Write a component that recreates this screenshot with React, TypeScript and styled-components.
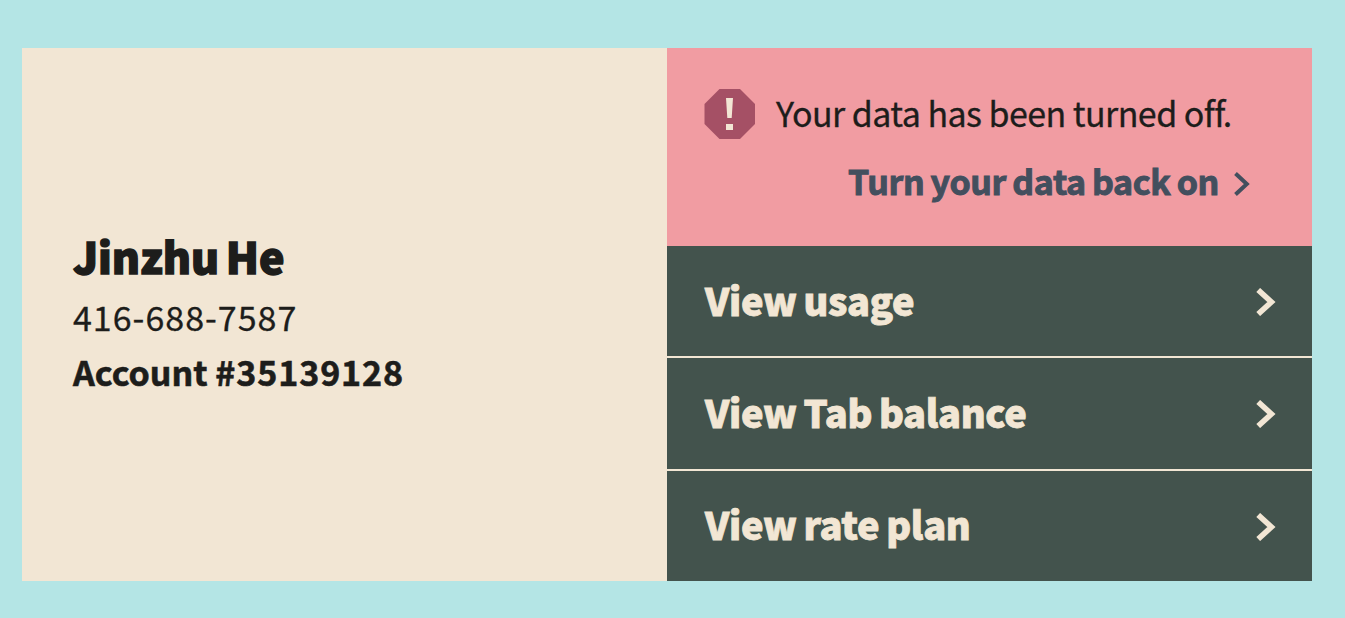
import styled, { createGlobalStyle } from 'styled-components';

const GlobalStyle = createGlobalStyle`
  * {
    box-sizing: border-box;
  }

  body {
    margin: 0;
    background: #b4e5e5;
    color: #1d1d1b;
    font-family: 'Noto Sans CJK SC', 'Noto Sans', sans-serif;
  }
`;

const Page = styled.main`
  height: 618px;
  padding: 48px 33px 37px 22px;
`;

const Card = styled.section`
  display: grid;
  grid-template-columns: repeat(2, minmax(0, 1fr));
  height: 533px;
  background: #f2e6d4;
`;

const Profile = styled.div`
  display: flex;
  flex-direction: column;
  padding: 177px 50px 0 51px;
`;

const Name = styled.h1`
  margin: 0 0 4px;
  font-size: 43px;
  font-weight: 900;
  line-height: 60px;
  letter-spacing: -0.1px;
  word-spacing: -3px;
  white-space: nowrap;
  -webkit-text-stroke: 1.4px currentColor;
`;

const Phone = styled.p`
  margin: 0;
  font-size: 34px;
  line-height: 56px;
  letter-spacing: 1px;
  -webkit-text-stroke: 0.3px currentColor;
`;

const Account = styled.p`
  margin: 0;
  font-size: 34px;
  font-weight: 700;
  line-height: 54px;
  white-space: nowrap;
  -webkit-text-stroke: 0.6px currentColor;
`;

const AccountNumber = styled.span`
  letter-spacing: 0.9px;
`;

const Actions = styled.div`
  display: flex;
  flex-direction: column;
`;

const Alert = styled.div`
  height: 198px;
  padding: 41px 62px 0 37px;
  background: #f19ca2;
`;

const Message = styled.div`
  display: flex;
  align-items: center;
  gap: 21px;
  height: 50px;
`;

const MessageText = styled.span`
  padding-bottom: 2px;
  font-size: 34px;
  line-height: 50px;
  letter-spacing: -0.56px;
  white-space: nowrap;
  -webkit-text-stroke: 0.3px currentColor;
`;

const TurnOn = styled.a`
  display: flex;
  align-items: center;
  justify-content: flex-end;
  gap: 15px;
  height: 50px;
  margin-top: 20px;
  color: #434f5e;
`;

const TurnOnLabel = styled.span`
  padding-bottom: 6px;
  font-size: 34px;
  font-weight: 700;
  line-height: 50px;
  letter-spacing: -0.4px;
  word-spacing: -1px;
  white-space: nowrap;
  -webkit-text-stroke: 1px currentColor;
`;

const Row = styled.a`
  display: flex;
  flex: 1;
  align-items: center;
  justify-content: space-between;
  padding: 0 36px 0 38px;
  background: #43534d;
  color: #f2e6d4;

  & + & {
    border-top: 2px solid #f2e6d4;
  }
`;

const RowLabel = styled.span`
  padding-bottom: 3px;
  font-size: 38px;
  font-weight: 900;
  line-height: 54px;
  letter-spacing: -0.35px;
  word-spacing: -1.5px;
  white-space: nowrap;
  -webkit-text-stroke: 0.8px currentColor;
`;

const RowIcon = styled.svg`
  margin-top: 2px;
`;

const links = ['View usage', 'View Tab balance', 'View rate plan'];

function AlertIcon() {
  return (
    <svg width="51" height="50" viewBox="0 0 51 50">
      <path d="M15.5 0H36L51 15V35L36 50H15.5L0.5 35V15Z" fill="#a55065" />
      <path d="M22 9H29L27.7 29H23.3ZM22 35H29V41H22Z" fill="#f2e6d4" />
    </svg>
  );
}

function SmallChevron() {
  return (
    <svg width="16" height="24" viewBox="0 0 16 24">
      <path d="M1.5 1.5L12.8 12L1.5 22.5" fill="none" stroke="currentColor" strokeWidth="4" />
    </svg>
  );
}

function Chevron() {
  return (
    <RowIcon width="20" height="28" viewBox="0 0 20 28">
      <path d="M2.2 2L15.4 14L2.2 26" fill="none" stroke="currentColor" strokeWidth="5.6" />
    </RowIcon>
  );
}

function App() {
  return (
    <>
      <GlobalStyle />
      <Page>
        <Card>
          <Profile>
            <Name>Jinzhu He</Name>
            <Phone>416-688-7587</Phone>
            <Account>
              Account <AccountNumber>#35139128</AccountNumber>
            </Account>
          </Profile>
          <Actions>
            <Alert>
              <Message>
                <AlertIcon />
                <MessageText>Your data has been turned off.</MessageText>
              </Message>
              <TurnOn>
                <TurnOnLabel>Turn your data back on</TurnOnLabel>
                <SmallChevron />
              </TurnOn>
            </Alert>
            {links.map((label) => (
              <Row key={label}>
                <RowLabel>{label}</RowLabel>
                <Chevron />
              </Row>
            ))}
          </Actions>
        </Card>
      </Page>
    </>
  );
}

export default App;
